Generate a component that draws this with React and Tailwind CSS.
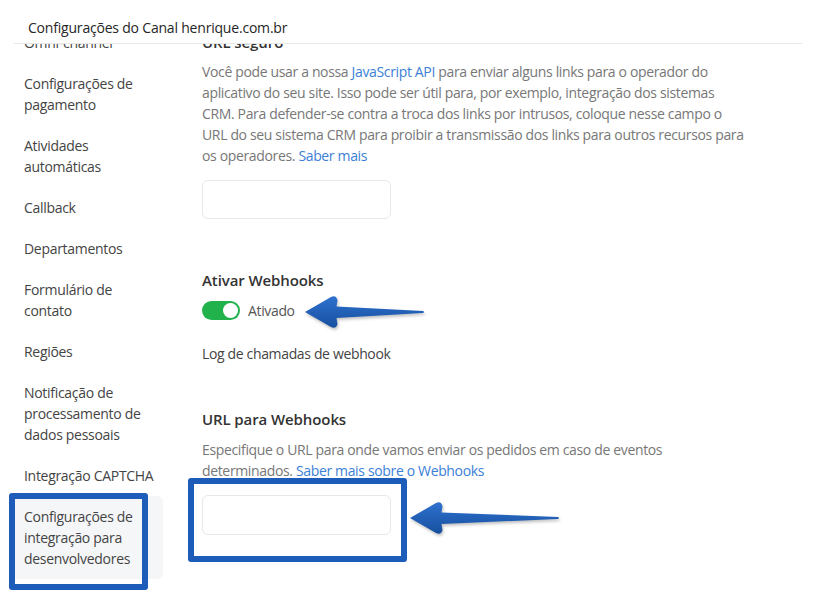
import React from "react";

const menu = [
  ["Omni-channel"],
  ["Configurações de", "pagamento"],
  ["Atividades", "automáticas"],
  ["Callback"],
  ["Departamentos"],
  ["Formulário de", "contato"],
  ["Regiões"],
  ["Notificação de", "processamento de", "dados pessoais"],
  ["Integração CAPTCHA"],
  ["Configurações de", "integração para", "desenvolvedores"],
];

// seta azul de anotação (desenhada por cima da tela)
const Arrow = ({ className, width, id }) => (
  <svg
    className={className}
    width={width}
    height="36"
    viewBox={`0 0 ${width} 36`}
    style={{ filter: "drop-shadow(1px 2px 1.5px rgba(0,0,0,0.25))" }}
  >
    <defs>
      <linearGradient id={id} x1="0" y1="0" x2="0" y2="1">
        <stop offset="0" stopColor="#2f72cf" />
        <stop offset="1" stopColor="#164f9f" />
      </linearGradient>
    </defs>
    <path
      d={`M1,18 L27,3 Q32,0.5 33.5,6 L32.5,12.5 L${width - 2},17 Q${width},18 ${width - 2},19 L32.5,24 L33.5,30 Q32,35.5 27,33 Z`}
      fill={`url(#${id})`}
    />
  </svg>
);

const Toggle = () => (
  <div className="flex h-[19px] w-[38px] items-center justify-end rounded-full bg-[#22b24c] pr-[2px]">
    <div className="h-[15px] w-[15px] rounded-full bg-white" />
  </div>
);

export default function App() {
  return (
    <div className="relative h-[607px] w-[816px] overflow-hidden bg-white font-['Open_Sans',sans-serif] text-[14px]">
      <header className="mx-[14px] h-[44px] border-b border-[#e8e8e8] px-[14px] pt-[17px] text-[14px] leading-[22px] font-medium tracking-[-0.2px] text-[#262626]">
        Configurações do Canal henrique.com.br
      </header>

      <div className="flex h-[563px] overflow-hidden">
        <nav className="-mt-[22px] ml-[10px] w-[153px] shrink-0">
          {menu.map((lines, i) => (
            <div
              key={i}
              className={
                "rounded-md py-[10px] pl-[14px] leading-[21px] tracking-[-0.3px] text-[#444] " +
                (i === menu.length - 1 ? "bg-[#f5f6f8]" : "")
              }
            >
              {lines.map((l) => (
                <div key={l} className="whitespace-nowrap">
                  {l}
                </div>
              ))}
            </div>
          ))}
        </nav>

        <main className="-mt-[13px] ml-[39px] tracking-[-0.35px]">
          <h3 className="text-[15px] leading-[22px] font-semibold tracking-[-0.1px] text-[#333]">URL seguro</h3>
          <p className="mt-2 whitespace-nowrap leading-[21px] text-[#777]">
            Você pode usar a nossa <span className="text-[#3b80d6]">JavaScript API</span> para enviar alguns links para o operador do
            <br />
            aplicativo do seu site. Isso pode ser útil para, por exemplo, integração dos sistemas
            <br />
            CRM. Para defender-se contra a troca dos links por intrusos, coloque nesse campo o
            <br />
            URL do seu sistema CRM para proibir a transmissão dos links para outros recursos para
            <br />
            os operadores. <span className="text-[#3b80d6]">Saber mais</span>
          </p>
          <div className="mt-[14px] h-[39px] w-[189px] rounded-md border border-[#e8e8e8]" />

          <h3 className="mt-[50px] text-[15px] leading-[22px] font-semibold tracking-[-0.1px] text-[#333]">Ativar Webhooks</h3>
          <div className="mt-[10px] flex h-[19px] items-center gap-2">
            <Toggle />
            <span className="text-[#555]">Ativado</span>
          </div>
          <div className="mt-[23px] leading-[21px] text-[#444]">Log de chamadas de webhook</div>

          <h3 className="mt-[44px] text-[15px] leading-[22px] font-semibold tracking-[-0.1px] text-[#333]">URL para Webhooks</h3>
          <p className="mt-[9px] whitespace-nowrap leading-[21px] text-[#777]">
            Especifique o URL para onde vamos enviar os pedidos em caso de eventos
            <br />
            determinados. <span className="text-[#3b80d6]">Saber mais sobre o Webhooks</span>
          </p>
          <div className="mt-[14px] h-[40px] w-[189px] rounded-md border border-[#e8e8e8]" />
        </main>
      </div>

      {/* anotações */}
      <div className="absolute left-[9px] top-[493px] h-[97px] w-[139px] rounded-[3px] border-[6px] border-[#1d5cb8]" />
      <div className="absolute left-[188px] top-[478px] h-[84px] w-[219px] rounded-[3px] border-[6px] border-[#1d5cb8]" />
      <Arrow className="absolute left-[304px] top-[294px]" width={121} id="a1" />
      <Arrow className="absolute left-[409px] top-[500px]" width={151} id="a2" />
    </div>
  );
}
